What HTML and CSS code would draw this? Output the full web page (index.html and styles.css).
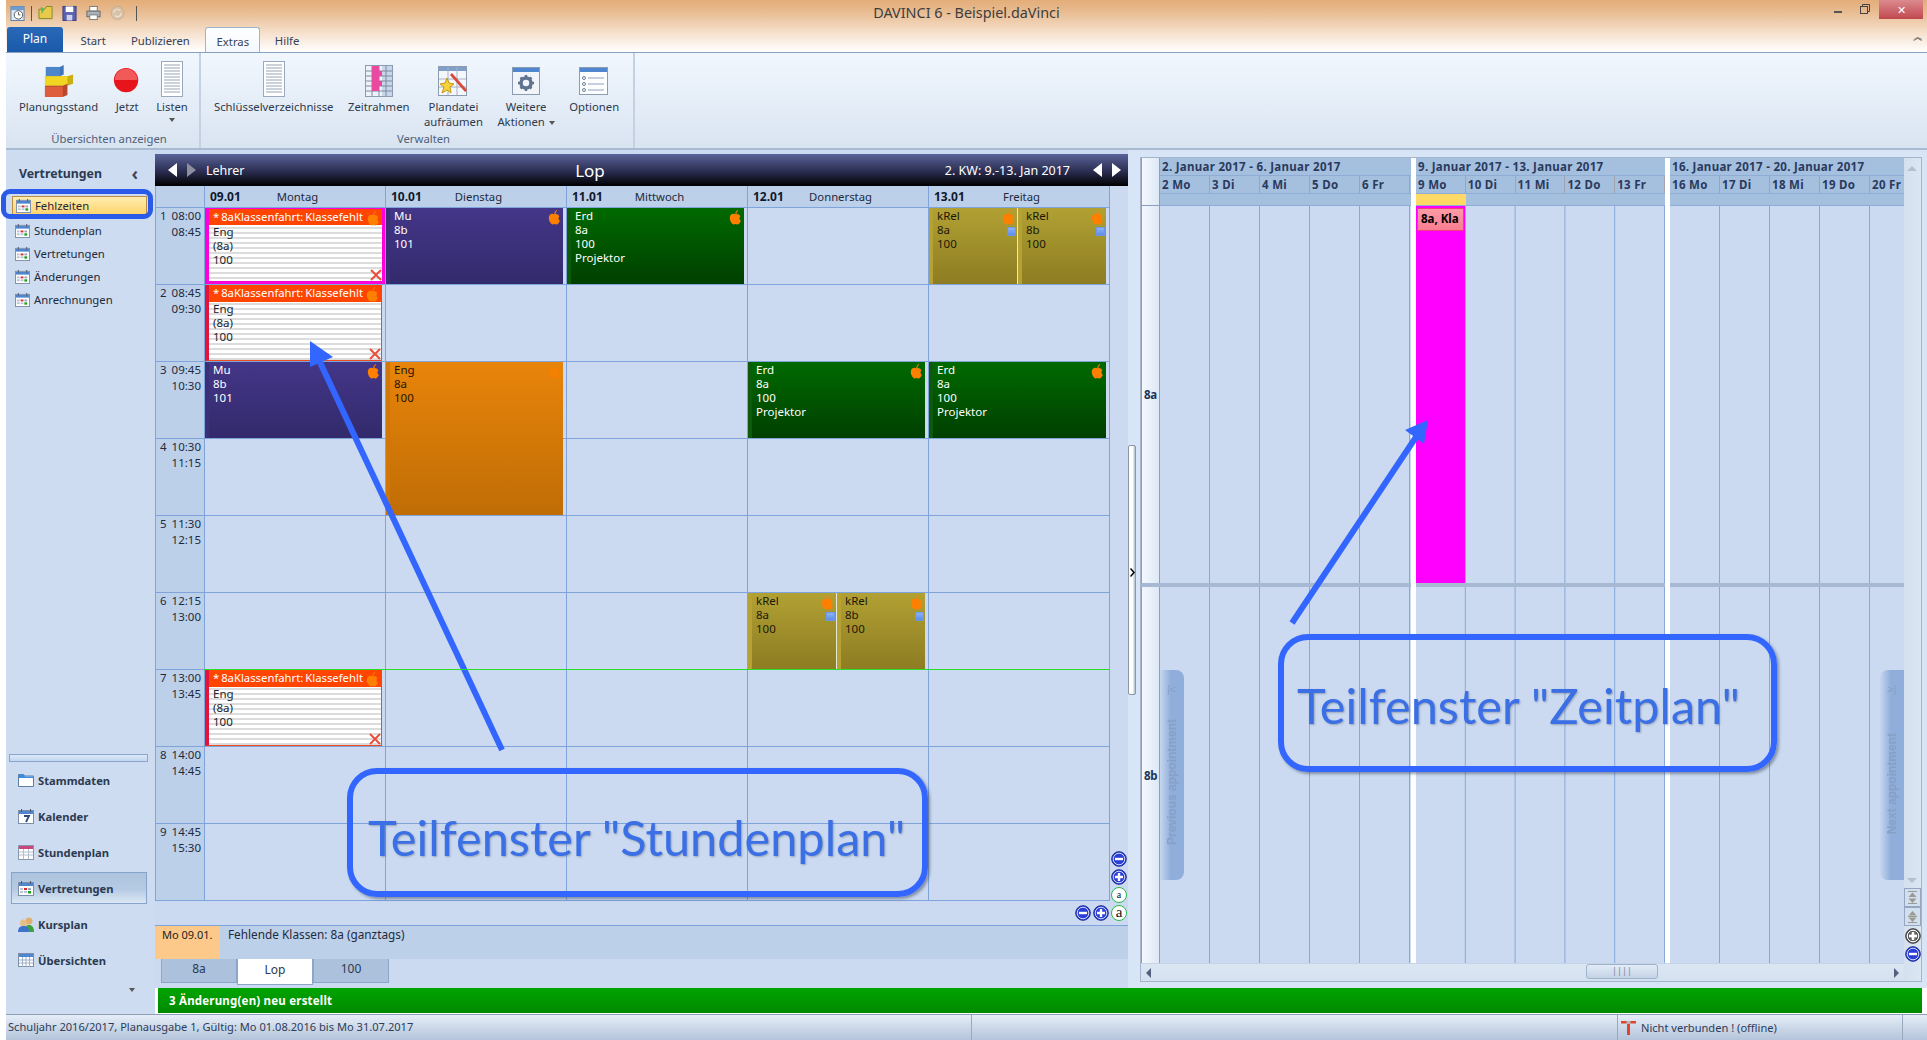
FILE: index.html
```html
<!DOCTYPE html>
<html lang="de">
<head>
<meta charset="utf-8">
<title>DAVINCI 6 - Beispiel.daVinci</title>
<link rel="stylesheet" href="styles.css">
</head>
<body>
<svg class="defs" width="0" height="0" aria-hidden="true">
  <symbol id="apple" viewBox="0 0 12 14"><path fill="#ff8000" d="M6 4C4 3 1 3.500.7 7c-.2 3 2 6.500 3.600 6.500.7 0 1-.4 1.700-.4s1 .4 1.700.4c1.400 0 2.800-2 3.300-3.500-1.400-.7-1.800-3-.5-4.200C9.500 4 7.500 3.300 6 4z"/><path fill="#ff8000" d="M5.800 4c0-1.500.7-3 2.200-4l.6.500C7.500 1.500 6.900 2.500 6.800 4z"/></symbol>
  <symbol id="cal" viewBox="0 0 16 16"><rect x=".5" y="2.500" width="15" height="13" fill="#fff" stroke="#7d8ea6"/><rect x="1" y="3" width="14" height="3" fill="#4f86d0"/><rect x="3" y="1" width="1" height="3" fill="#556"/><rect x="12" y="1" width="1" height="3" fill="#556"/><g fill="#b9c4d4"><rect x="2" y="8" width="3" height="2"/><rect x="2" y="11" width="3" height="2"/><rect x="6" y="11" width="3" height="2"/></g><rect x="6" y="8" width="3" height="2" fill="#d92b2b"/><rect x="10" y="8" width="3" height="2" fill="#9aa6b8"/><rect x="10" y="11" width="3" height="2.500" fill="#1ea01e"/></symbol>
  <symbol id="doc" viewBox="0 0 22 36"><rect x=".5" y=".5" width="21" height="35" fill="#fff" stroke="#9aa9bb"/><path stroke="#97a4b5" d="M3 4h16M3 7h16M3 10h16M3 13h16M3 16h16M3 19h16M3 22h16M3 25h16M3 28h16M3 31h16"/></symbol>
  <symbol id="xmark" viewBox="0 0 12 12"><path d="M1 1l10 10M11 1L1 11" stroke="#e8503c" stroke-width="2"/></symbol>
  <symbol id="minus" viewBox="0 0 16 16"><circle cx="8" cy="8" r="7.300" fill="#2b3fd6" stroke="#1a2a90"/><circle cx="8" cy="8" r="5.800" fill="none" stroke="#cfd8ff"/><rect x="4" y="6.800" width="8" height="2.400" fill="#fff"/></symbol>
  <symbol id="plus" viewBox="0 0 16 16"><circle cx="8" cy="8" r="7.300" fill="#2b3fd6" stroke="#1a2a90"/><circle cx="8" cy="8" r="5.800" fill="none" stroke="#cfd8ff"/><path d="M4 8h8M8 4v8" stroke="#fff" stroke-width="2.400"/></symbol>
</svg>

<div class="app">
  <header class="top">
    <div class="titlebar">
      <div class="qat">
        <svg class="q" viewBox="0 0 16 18"><rect x="1" y="2" width="14" height="15" fill="#dce9f7" stroke="#5d7ea8"/><rect x="1" y="2" width="14" height="4" fill="#6f9bd0"/><circle cx="9" cy="11" r="4.500" fill="#fff" stroke="#555"/><path d="M9 8v3h2" stroke="#555" fill="none"/></svg>
        <span class="qsep"></span>
        <svg class="q" viewBox="0 0 16 18"><path d="M1 5h6l2-3h6v13H1z" fill="#e8c94a" stroke="#7b8a2a"/><path d="M3 2l4 3-3 5z" fill="#5cb85c"/></svg>
        <svg class="q" viewBox="0 0 16 18"><rect x="1" y="2" width="14" height="15" fill="#5a62b0" stroke="#3b3f80"/><rect x="4" y="2" width="8" height="6" fill="#fff"/><rect x="5" y="11" width="6" height="6" fill="#cfd3ea"/></svg>
        <svg class="q" viewBox="0 0 16 18"><rect x="4" y="2" width="8" height="5" fill="#fff" stroke="#777"/><rect x="1" y="7" width="14" height="6" fill="#aab2bd" stroke="#666"/><rect x="4" y="11" width="8" height="5" fill="#fff" stroke="#777"/></svg>
        <svg class="q dim" viewBox="0 0 16 18"><circle cx="8" cy="9" r="7" fill="#d4c3ad" stroke="#bfa98f"/><path d="M4 9a4 4 0 0 1 7-2.500M12 9a4 4 0 0 1-7 2.500" stroke="#efe6da" stroke-width="1.500" fill="none"/></svg>
        <span class="qsep q-last"></span>
      </div>
      <div class="apptitle">DAVINCI 6 - Beispiel.daVinci</div>
      <div class="winctl">
        <span class="wmin"></span>
        <svg class="wrest" viewBox="0 0 10 10"><path d="M2.500 2.500V.5h7v7H7.500" fill="none" stroke="#444"/><rect x=".5" y="2.500" width="7" height="7" fill="none" stroke="#444"/></svg>
        <span class="wclose">✕</span>
      </div>
    </div>
    <nav class="tabs">
      <span class="tab tab-plan">Plan</span>
      <span class="tab">Start</span>
      <span class="tab">Publizieren</span>
      <span class="tab tab-on">Extras</span>
      <span class="tab">Hilfe</span>
      <span class="collapse">︽</span>
    </nav>
  </header>

  <section class="ribbon">
    <div class="rgroup rg1">
      <div class="rbtns">
        <div class="rbtn"><svg class="ri ri-wide" viewBox="0 0 32 34"><path d="M2 2h15l4-2v10l-4 2H2z" fill="#3f74b8"/><path d="M2 2h15v10H2z" fill="#4d86cc"/><path d="M1 12h24l6-2v10l-6 2H1z" fill="#c9ae14"/><path d="M1 12h24v10H1z" fill="#f0d623"/><path d="M1 22h19l5-2v12l-5 2H1z" fill="#b8482c"/><path d="M1 23h19v11H1z" fill="#df5c3c"/></svg><span>Planungsstand</span></div>
        <div class="rbtn"><svg class="ri" viewBox="0 0 32 32"><circle cx="15" cy="15" r="13" fill="#e8141c"/><path d="M3 15a12 12 0 0 1 24 0z" fill="#f25a5a"/></svg><span>Jetzt</span></div>
        <div class="rbtn"><svg class="ri tall" viewBox="0 0 22 36"><use href="#doc"/></svg><span>Listen</span><i class="caret"></i></div>
      </div>
      <div class="rlabel">Übersichten anzeigen</div>
    </div>
    <div class="rgroup rg2">
      <div class="rbtns">
        <div class="rbtn"><svg class="ri tall" viewBox="0 0 22 36"><use href="#doc"/></svg><span>Schlüsselverzeichnisse</span></div>
        <div class="rbtn"><svg class="ri" viewBox="0 0 28 32"><rect x=".5" y=".5" width="27" height="31" fill="#eef3f9" stroke="#8d9bb0"/><rect x="17" y="1" width="10" height="30" fill="#c7d6ea"/><path d="M7 1v30M14 1v30M21 1v30M1 6h26M1 11h26M1 16h26M1 21h26M1 26h26" stroke="#7f8a9c"/><path d="M7 1h7v5h3v5h-3v5h3v5h-3v5h-7z" fill="#e94aa0"/></svg><span>Zeitrahmen</span></div>
        <div class="rbtn"><svg class="ri" viewBox="0 0 30 32"><rect x=".5" y="1.500" width="28" height="29" fill="#f4f7fb" stroke="#8d9bb0"/><rect x="1" y="2" width="27" height="4" fill="#7f9fc8"/><path d="M10 2v28M19 2v28M1 14h27M1 22h27" stroke="#a5b2c4"/><path d="M9 13l2 5 5 1-4 3 1 6-4-3-5 3 2-6-4-3 5-1z" fill="#f3d23c" stroke="#c59a14"/><path d="M14 8l15 17-2 2L12 10z" fill="#d9483c"/></svg><span>Plandatei<br>aufräumen</span></div>
        <div class="rbtn"><svg class="ri" viewBox="0 0 28 32"><rect x=".5" y="2.500" width="27" height="27" fill="#f1f5fa" stroke="#8d9bb0"/><rect x="1" y="3" width="26" height="4" fill="#4f86d0"/><circle cx="14" cy="18" r="5" fill="none" stroke="#5f7390" stroke-width="3.500"/><path d="M14 10v3M14 23v3M6 18h3M19 18h3M8.500 12.500l2 2M17.500 21.500l2 2M19.500 12.500l-2 2M10.500 21.500l-2 2" stroke="#5f7390" stroke-width="2.500"/></svg><span>Weitere<br>Aktionen <i class="caret inl"></i></span></div>
        <div class="rbtn"><svg class="ri" viewBox="0 0 30 32"><rect x=".5" y="2.500" width="28" height="27" fill="#fbfdff" stroke="#8d9bb0"/><rect x="1" y="3" width="27" height="4" fill="#4f86d0"/><path d="M9 13h16M9 19h16M9 25h16" stroke="#8fa4c0"/><g fill="none" stroke="#6d7f99"><circle cx="5" cy="13" r="1.500"/><circle cx="5" cy="19" r="1.500"/><circle cx="5" cy="25" r="1.500"/></g></svg><span>Optionen</span></div>
      </div>
      <div class="rlabel">Verwalten</div>
    </div>
  </section>

  <div class="body">
    <aside class="side">
      <div class="sidehead"><b>Vertretungen</b><span class="chev">‹</span></div>
      <ul class="sitems">
        <li class="sitem on"><svg class="ic"><use href="#cal"/></svg>Fehlzeiten</li>
        <li class="sitem"><svg class="ic"><use href="#cal"/></svg>Stundenplan</li>
        <li class="sitem"><svg class="ic"><use href="#cal"/></svg>Vertretungen</li>
        <li class="sitem"><svg class="ic"><use href="#cal"/></svg>Änderungen</li>
        <li class="sitem"><svg class="ic"><use href="#cal"/></svg>Anrechnungen</li>
      </ul>
      <div class="sgrip"></div>
      <ul class="snav">
        <li class="nav"><svg class="nic" viewBox="0 0 16 14"><path d="M.5 1.500h5l1 1.500h9v10.500H.5z" fill="#fff" stroke="#5c7fa8"/><path d="M1 1.500h5l1 2h8v1.500H1z" fill="#3d8be0"/></svg>Stammdaten</li>
        <li class="nav"><svg class="nic" viewBox="0 0 16 16"><rect x=".5" y="2.500" width="15" height="13" fill="#fff" stroke="#7d8ea6"/><rect x="1" y="3" width="14" height="3" fill="#4f86d0"/><rect x="3" y="1" width="1" height="3" fill="#556"/><rect x="12" y="1" width="1" height="3" fill="#556"/><path d="M6 8h5l-3 6" fill="none" stroke="#2a4a7a" stroke-width="1.800"/></svg>Kalender</li>
        <li class="nav"><svg class="nic" viewBox="0 0 16 16"><rect x=".5" y="1.500" width="15" height="14" fill="#fff" stroke="#8a97ab"/><rect x="1" y="2" width="14" height="3" fill="#c9487c"/><path d="M1 8h14M1 11h14M5.500 5v10M10.500 5v10" stroke="#b3bfd0"/></svg>Stundenplan</li>
        <li class="nav on"><svg class="nic"><use href="#cal"/></svg>Vertretungen</li>
        <li class="nav"><svg class="nic" viewBox="0 0 16 16"><circle cx="11" cy="5" r="3.500" fill="#e0b070"/><path d="M6 16c0-5 2-7 5-7s5 2 5 7z" fill="#3fa03f"/><circle cx="5.500" cy="7" r="3.500" fill="#e8be84"/><path d="M0 16c0-4 2-6 5.500-6S11 12 11 16z" fill="#3b74c8"/></svg>Kursplan</li>
        <li class="nav"><svg class="nic" viewBox="0 0 16 14"><rect x=".5" y=".5" width="15" height="13" fill="#fff" stroke="#7d8ea6"/><rect x="1" y="1" width="14" height="3" fill="#4f86d0"/><path d="M1 7h14M1 10h14M4.500 4v10M8 4v10M11.500 4v10" stroke="#9fb0c8"/></svg>Übersichten</li>
      </ul>
      <div class="smore"><i class="caret"></i></div>
    </aside>

    <main class="content">
      <div class="panes">
        <section class="plan">
          <div class="phead">
            <div class="ph-left"><i class="tri-l"></i><i class="tri-r dim"></i><span class="ph-kind">Lehrer</span></div>
            <div class="ph-mid">Lop</div>
            <div class="ph-right"><span>2. KW: 9.-13. Jan 2017</span><i class="tri-l"></i><i class="tri-r"></i></div>
          </div>

          <div class="tt">
            <div class="dh corner"></div>
            <div class="dh"><b>09.01</b><span>Montag</span></div>
            <div class="dh"><b>10.01</b><span>Dienstag</span></div>
            <div class="dh"><b>11.01</b><span>Mittwoch</span></div>
            <div class="dh"><b>12.01</b><span>Donnerstag</span></div>
            <div class="dh"><b>13.01</b><span>Freitag</span></div>

            <div class="tm r1"><span>1</span><p>08:00<br>08:45</p></div>
            <div class="tm r2"><span>2</span><p>08:45<br>09:30</p></div>
            <div class="tm r3"><span>3</span><p>09:45<br>10:30</p></div>
            <div class="tm r4"><span>4</span><p>10:30<br>11:15</p></div>
            <div class="tm r5"><span>5</span><p>11:30<br>12:15</p></div>
            <div class="tm r6"><span>6</span><p>12:15<br>13:00</p></div>
            <div class="tm r7"><span>7</span><p>13:00<br>13:45</p></div>
            <div class="tm r8"><span>8</span><p>14:00<br>14:45</p></div>
            <div class="tm r9"><span>9</span><p>14:45<br>15:30</p></div>

            <div class="nowline"></div>

            <article class="abs mag c1 r1"><div class="abs-h">* 8aKlassenfahrt: Klassefehlt</div><div class="abs-b">Eng<br>(8a)<br>100</div><svg class="apl"><use href="#apple"/></svg><svg class="xm"><use href="#xmark"/></svg></article>
            <article class="abs c1 r2"><div class="abs-h">* 8aKlassenfahrt: Klassefehlt</div><div class="abs-b">Eng<br>(8a)<br>100</div><svg class="apl"><use href="#apple"/></svg><svg class="xm"><use href="#xmark"/></svg></article>
            <article class="abs c1 r7"><div class="abs-h">* 8aKlassenfahrt: Klassefehlt</div><div class="abs-b">Eng<br>(8a)<br>100</div><svg class="apl"><use href="#apple"/></svg><svg class="xm"><use href="#xmark"/></svg></article>

            <article class="les pur c1 r3">Mu<br>8b<br>101<svg class="apl"><use href="#apple"/></svg></article>
            <article class="les pur c2 r1">Mu<br>8b<br>101<svg class="apl"><use href="#apple"/></svg></article>
            <article class="les org c2 r3 span2">Eng<br>8a<br>100<svg class="apl"><use href="#apple"/></svg></article>
            <article class="les grn c3 r1">Erd<br>8a<br>100<br>Projektor<svg class="apl"><use href="#apple"/></svg></article>
            <article class="les grn c4 r3">Erd<br>8a<br>100<br>Projektor<svg class="apl"><use href="#apple"/></svg></article>
            <article class="les grn c5 r3">Erd<br>8a<br>100<br>Projektor<svg class="apl"><use href="#apple"/></svg></article>

            <div class="pair c4 r6">
              <article class="les olv">kRel<br>8a<br>100<svg class="apl"><use href="#apple"/></svg><i class="note"></i></article>
              <article class="les olv">kRel<br>8b<br>100<svg class="apl"><use href="#apple"/></svg><i class="note"></i></article>
            </div>
            <div class="pair c5 r1">
              <article class="les olv">kRel<br>8a<br>100<svg class="apl"><use href="#apple"/></svg><i class="note"></i></article>
              <article class="les olv">kRel<br>8b<br>100<svg class="apl"><use href="#apple"/></svg><i class="note"></i></article>
            </div>
          </div>
          <div class="ttpad"></div>

          <div class="pfoot">
            <div class="pf-date">Mo 09.01.</div>
            <div class="pf-text">Fehlende Klassen: 8a (ganztags)</div>
          </div>
          <div class="ptabs">
            <span class="ptab">8a</span>
            <span class="ptab on">Lop</span>
            <span class="ptab">100</span>
          </div>

          <div class="zoomv">
            <svg class="zb"><use href="#minus"/></svg>
            <svg class="zb"><use href="#plus"/></svg>
            <span class="za small">a</span>
          </div>
          <div class="zoomh">
            <svg class="zb"><use href="#minus"/></svg>
            <svg class="zb"><use href="#plus"/></svg>
            <span class="za">a</span>
          </div>
        </section>

        <div class="splitter"><div class="pill"><svg class="pill-a" viewBox="0 0 5 9"><path d="M.5.500l3.500 4-3.500 4" fill="none" stroke="#000" stroke-width="1.500"/></svg></div></div>

        <section class="zeit">
          <div class="zmain">
            <div class="zcanvas">
              <div class="zlabels">
                <div class="zl-h"></div>
                <div class="zl a">8a</div>
                <div class="zl-gap"></div>
                <div class="zl b">8b</div>
              </div>
              <div class="week w1">
                <div class="wtitle">2. Januar 2017 - 6. Januar 2017</div>
                <div class="wdays"><span>2 Mo</span><span>3 Di</span><span>4 Mi</span><span>5 Do</span><span>6 Fr</span></div>
                <div class="wsub"></div>
                <div class="wrow a"></div><div class="wgap"></div><div class="wrow b"></div>
              </div>
              <div class="week w2">
                <div class="wtitle">9. Januar 2017 - 13. Januar 2017</div>
                <div class="wdays"><span>9 Mo</span><span>10 Di</span><span>11 Mi</span><span>12 Do</span><span>13 Fr</span></div>
                <div class="wsub"><i class="mark"></i></div>
                <div class="wrow a"><div class="evt"><div class="evt-l">8a, Kla</div></div></div><div class="wgap"></div><div class="wrow b"></div>
              </div>
              <div class="week w3">
                <div class="wtitle">16. Januar 2017 - 20. Januar 2017</div>
                <div class="wdays"><span>16 Mo</span><span>17 Di</span><span>18 Mi</span><span>19 Do</span><span>20 Fr</span></div>
                <div class="wsub"></div>
                <div class="wrow a"></div><div class="wgap"></div><div class="wrow b"></div>
              </div>
            </div>
            <div class="hbar">
              <i class="harr l"></i>
              <div class="hthumb"><span>||||</span></div>
              <i class="harr r"></i>
            </div>
          </div>
          <div class="vbar">
            <i class="varr up"></i>
            <i class="varr down"></i>
            <div class="vbtns">
              <span class="vb"><svg class="vbi" viewBox="0 0 15 17"><path d="M3 2.500h9M3 14.500h9" stroke="#9a9a90"/><path d="M7.500 3.500l4 4.500h-8zM7.500 14l4-4.500h-8z" fill="#9a9a90"/></svg></span>
              <span class="vb"><svg class="vbi" viewBox="0 0 15 17"><path d="M3 8.500h9M3 14.500h9" stroke="#9a9a90"/><path d="M7.500 3l4 4.500h-8zM7.500 14l-4-4.500h8z" fill="#9a9a90"/></svg></span>
              <svg class="zb gray"><use href="#plus"/></svg>
              <svg class="zb"><use href="#minus"/></svg>
            </div>
          </div>
          <div class="appt prev"><span>Previous appointment</span><em>|&lt;</em></div>
          <div class="appt next"><span>Next appointment</span><em>&gt;|</em></div>
        </section>
      </div>
      <div class="greenbar">3 Änderung(en) neu erstellt</div>
    </main>
  </div>

  <footer class="status">
    <div class="st st1">Schuljahr 2016/2017, Planausgabe 1, Gültig: Mo 01.08.2016 bis Mo 31.07.2017</div>
    <div class="st st2"></div>
    <div class="st st3"><svg class="tic" viewBox="0 0 15 15"><path d="M0 1h15v2.500H9V15H6V3.500H0z" fill="#e0442c"/><rect x="5.500" y="1" width="4" height="3" fill="#b5b5b5"/></svg>Nicht verbunden ! (offline)</div>
    <div class="st st4"></div>
  </footer>

  <div class="hl-side"></div>
  <div class="callout c-stunden">Teilfenster "Stundenplan"</div>
  <div class="callout c-zeit">Teilfenster "Zeitplan"</div>
  <svg class="arrows" viewBox="0 0 1927 1040">
    <path d="M502 750L318 358" stroke="#3366ff" stroke-width="6" fill="none"/>
    <path d="M310 341L310 367L333 357z" fill="#3366ff"/>
    <path d="M1292 623L1418 434" stroke="#3366ff" stroke-width="6" fill="none"/>
    <path d="M1428 420L1405 430L1424 444z" fill="#3366ff"/>
  </svg>
</div>
</body>
</html>
```

FILE: styles.css
```css
* { box-sizing: border-box; }
html, body { margin: 0; padding: 0; background: #fff; }
body { width: 1927px; height: 1040px; overflow: hidden; font-family: "Noto Sans", "Open Sans", sans-serif; font-size: 12px; color: #1f2a3c; }
.defs { position: absolute; }
ul { list-style: none; margin: 0; padding: 0; }
p { margin: 0; }

.app { position: relative; width: 1927px; height: 1040px; padding-left: 6px; display: flex; flex-direction: column; overflow: hidden; }

/* title + tabs */
.top { height: 52px; background: linear-gradient(#e3ad78 0, #e8bb90 22%, #f6e2cf 65%, #fff 100%); flex: none; display: flex; flex-direction: column; }
.titlebar { height: 27px; display: grid; grid-template-columns: 1fr auto 1fr; align-items: start; }
.qat { display: flex; align-items: center; gap: 9px; padding: 4px 0 0 4px; }
.q { width: 15px; height: 18px; flex: none; }
.q.dim { opacity: .8; }
.qsep { width: 1px; height: 15px; background: #555; margin: 0 -3px 0 -3px; }
.q-last { margin-left: 2px; }
.apptitle { font-size: 14.400px; color: #3d3d3d; line-height: 25px; }
.winctl { display: flex; justify-content: flex-end; align-items: flex-start; margin-right: 4px; }
.wmin { width: 8px; height: 2px; background: #555; margin: 11px 18px 0 0; }
.wrest { width: 10px; height: 10px; margin: 4px 9px 0 0; }
.wclose { width: 44px; height: 19px; background: linear-gradient(#dc8a8e, #c0484f); color: #fff; text-align: center; font-size: 11px; line-height: 19px; }

.tabs { height: 25px; display: flex; align-items: flex-end; position: relative; }
.tab { height: 25px; line-height: 28px; padding: 0 12.500px; color: #33435a; font-size: 11.300px; }
.tab-plan { width: 56px; margin-left: 1px; padding: 0; text-align: center; color: #fff; background: linear-gradient(#2a68b8, #1a5aaa); border-radius: 3px 3px 0 0; line-height: 24px; font-size: 12px; margin-right: 5px; }
.tab-on { width: 55px; padding: 0; text-align: center; background: linear-gradient(#fff, #f4f8fd); border: 1px solid #9db4cf; border-bottom: 0; border-radius: 3px 3px 0 0; margin-left: 3px; margin-right: 2px; }
.collapse { position: absolute; right: 4px; top: 2px; font-size: 10px; color: #333; }

/* ribbon */
.ribbon { height: 98px; flex: none; display: flex; background: linear-gradient(#f1f7fe, #d9e4f1); border-top: 1px solid #87a1be; border-bottom: 2px solid #a9bbd0; }
.rgroup { display: flex; flex-direction: column; border-right: 2px solid #c3d2e3; }
.rg1 { width: 195px; padding-left: 13px; }
.rg2 { width: 434px; padding-left: 13px; }
.rbtns { flex: 1; display: flex; gap: 14.500px; }
.rg1 .rbtns { gap: 14px; }
.rbtn { display: flex; flex-direction: column; align-items: center; text-align: center; font-size: 11.300px; line-height: 15px; color: #2e3a4c; padding-top: 12px; position: relative; white-space: nowrap; }
.ri { width: 30px; height: 32px; margin-bottom: 2px; }
.ri.ri-wide { width: 30px; height: 32px; }
.ri.tall { width: 22px; height: 36px; margin-top: -4px; }
.rlabel { text-align: center; font-size: 11.300px; line-height: 14px; color: #506078; height: 16px; }
.caret { display: block; width: 0; height: 0; border: 3px solid transparent; border-top: 4px solid #555; border-bottom: 0; margin-top: 4px; }
.caret.inl { display: inline-block; vertical-align: middle; margin: 0 0 0 1px; }

/* body */
.body { flex: 1; display: flex; min-height: 0; }
.side { width: 149px; flex: none; background: #cddcf0; display: flex; flex-direction: column; }
.sidehead { height: 46px; display: flex; align-items: center; justify-content: space-between; padding: 0 17px 0 13px; font-size: 12.300px; color: #2c3a50; }
.chev { font-size: 18px; color: #445; font-weight: 700; line-height: 1; }
.sitem { height: 23px; display: flex; align-items: center; gap: 4px; padding-left: 9px; color: #1f2a3c; font-size: 11.300px; }
.sitem.on { height: 19px; margin: 0 8px 4px 6px; padding-left: 3px; background: linear-gradient(#ffeeb0, #ffd36d); border: 1px solid #b98c48; }
.ic { width: 15px; height: 15px; flex: none; }
.sgrip { height: 8px; margin: auto 7px 0 3px; border: 1px solid #8aa6cc; background: linear-gradient(#dbe8f8, #c4d6ee); }
.nav { height: 36px; display: flex; align-items: center; gap: 4px; padding-left: 12px; font-weight: 700; font-size: 11.200px; color: #2c3a50; }
.nav.on { height: 32px; margin: 2px 8px 2px 5px; padding-left: 6px; border: 1px solid #86a3c9; background: linear-gradient(#adc4de, #b6cbe3 55%, #dbe7f4); }
.nic { width: 16px; height: 16px; flex: none; }
.smore { height: 36px; display: flex; justify-content: flex-end; padding: 6px 20px 0 0; }

.content { flex: 1; display: flex; flex-direction: column; min-width: 0; }
.panes { height: 838px; flex: none; display: flex; background: #d7e5f6; }

/* Stundenplan */
.plan { width: 973px; flex: none; position: relative; background: #cbdaf0; padding-top: 4px; display: flex; flex-direction: column; }
.phead { height: 32px; flex: none; display: flex; align-items: center; background: linear-gradient(#5a6399, #2a2d50 55%, #000); color: #fff; }
.ph-left { width: 388px; display: flex; align-items: center; gap: 10px; padding-left: 13px; font-size: 12.500px; }
.ph-mid { width: 94px; text-align: center; font-size: 17px; }
.ph-right { flex: 1; display: flex; align-items: center; justify-content: flex-end; gap: 10px; padding-right: 7px; font-size: 12.500px; }
.ph-right span { margin-right: 13px; }
.tri-l, .tri-r { width: 0; height: 0; border-style: solid; border-color: transparent; }
.tri-l { border-width: 7px 9px 7px 0; border-right-color: #fff; }
.tri-r { border-width: 7px 0 7px 9px; border-left-color: #fff; }
.tri-r.dim { border-left-color: #8d8f9f; }

.tt { width: 955px; height: 715px; display: grid; flex: none; grid-template-columns: 48px repeat(5, 181px); grid-template-rows: 21px repeat(9, 77px);
  background-color: #cbdaf0;
  background-image: linear-gradient(to right, #7fa4dc 1px, transparent 1px), linear-gradient(to bottom, #7fa4dc 1px, transparent 1px);
  background-size: 181px 100%, 100% 77px; background-position: 48px 0, 0 21px;
  border-left: 1px solid #7fa4dc; border-right: 1px solid #7fa4dc; border-bottom: 1px solid #7fa4dc; position: relative; }
.dh { background: #bcd0ea; border-left: 1px solid #7fa4dc; display: grid; grid-template-columns: 1fr auto 1fr; align-items: center; padding-left: 5px; font-size: 11.300px; }
.dh.corner { border-left: 0; display: block; }
.dh b { font-size: 12px; color: #10182a; }
.tm { grid-column: 1; background: #bcd0ea; border-top: 1px solid #7fa4dc; display: flex; justify-content: space-between; padding: 0 3px 0 4px; font-size: 11.500px; line-height: 16px; color: #1f2a3c; }
.tm p { text-align: right; }
.r1 { grid-row: 2; } .r2 { grid-row: 3; } .r3 { grid-row: 4; } .r4 { grid-row: 5; } .r5 { grid-row: 6; } .r6 { grid-row: 7; } .r7 { grid-row: 8; } .r8 { grid-row: 9; } .r9 { grid-row: 10; }
.span2 { grid-row-end: span 2; }
.c1 { grid-column: 2; } .c2 { grid-column: 3; } .c3 { grid-column: 4; } .c4 { grid-column: 5; } .c5 { grid-column: 6; }
.nowline { grid-column: 2 / -1; grid-row: 8; height: 1px; background: #28e028; align-self: start; z-index: 2; }

.les { position: relative; margin: 1px 3px 0 1px; border-left: 4px solid; padding: 1px 0 0 4px; line-height: 14px; font-size: 11.500px; min-width: 0; }
.pur { background: linear-gradient(#443688, #322a6c); border-color: #3a3078; color: #fff; }
.grn { background: linear-gradient(#006a00, #003f00); border-color: #0d5a0d; color: #fff; }
.org { background: linear-gradient(#e8840a, #bf6d05); border-color: #d27608; color: #1f1400; }
.olv { background: linear-gradient(#b1a133, #8d7c22); border-color: #b5a233; color: #1c1808; margin: 0; flex: 1; }
.org .apl { opacity: .6; }
.apl { position: absolute; right: 2px; top: 2px; width: 13px; height: 15px; }
.note { position: absolute; right: 1px; top: 19px; width: 9px; height: 9px; background: linear-gradient(#8ab2f5, #5e8de8); border: 1px solid #6f98e0; }
.pair { display: flex; gap: 1px; margin: 1px 3px 0 1px; background: #e4e6d8; min-width: 0; }

.abs { position: relative; margin: 1px 3px 0 1px; border-right: 1px solid #f04a20; border-bottom: 1px solid #f04a20; border-left: 4px solid #e0143c; background: repeating-linear-gradient(#fff 0 3px, #dcdcdc 3px 5px); display: flex; flex-direction: column; font-size: 11.500px; line-height: 14px; min-width: 0; }
.abs.mag { margin: 1px 0 0 1px; border: 3px solid #ff00d8; border-top-width: 1px; border-left-width: 4px; }
.abs-h { background: #ff4500; color: #fff; height: 17px; padding-left: 4px; line-height: 15px; white-space: nowrap; overflow: hidden; word-spacing: -1px; margin-right: -1px; font-size: 11.300px; flex: none; }
.abs.mag .abs-h { height: 16px; margin-right: 0; }
.abs-b { padding: 0 0 0 4px; color: #20242c; }
.xm { position: absolute; right: 0; bottom: 0; width: 12px; height: 12px; }
.ttpad { height: 25px; flex: none; border-bottom: 1px solid #7fa4dc; }

.pfoot { height: 33px; flex: none; background: #bcd0ea; display: flex; font-size: 11.800px; line-height: 16px; }
.pf-date { width: 65px; background: #fdc98a; padding: 1px 0 0 7px; font-size: 11px; color: #222; }
.pf-text { padding: 0 0 0 8px; }
.ptabs { display: flex; padding-left: 6px; }
.ptab { width: 76px; height: 24px; background: #acc1dc; border: 1px solid #8ca6c9; border-top: 0; text-align: center; line-height: 19px; font-size: 12px; color: #2b3a52; }
.ptab.on { height: 26px; background: #fff; line-height: 21px; }

.zoomv { position: absolute; right: 1px; top: 701px; display: flex; flex-direction: column; gap: 2px; width: 16px; }
.zoomh { position: absolute; right: 1px; top: 755px; display: flex; gap: 2px; }
.zb { width: 16px; height: 16px; flex: none; display: block; }
.zb.gray { filter: grayscale(1) brightness(1.3); }
.za { width: 16px; height: 16px; border-radius: 50%; border: 1px solid #27b84a; background: #fff; text-align: center; font-family: "Liberation Serif", serif; font-size: 15px; line-height: 12px; color: #111; }
.za.small { font-size: 10px; line-height: 13px; }

.splitter { width: 12px; flex: none; position: relative; background: #d7e5f6; }
.pill { position: absolute; left: 0; top: 295px; width: 8px; height: 250px; background: linear-gradient(to right, #fff 60%, #a9bcc8); border: 1px solid #8b98a8; border-radius: 2px; }
.pill-a { position: absolute; left: 1px; top: 122px; width: 5px; height: 9px; }

/* Zeitplan */
.zeit { width: 782px; height: 825px; margin-top: 7px; flex: none; position: relative; display: flex; border: 1px solid #a3b4cb; background: #cbdaf0; }
.zmain { width: 763px; display: flex; flex-direction: column; flex: none; }
.zcanvas { flex: 1; display: flex; min-height: 0; }
.zlabels { width: 19px; flex: none; background: linear-gradient(to right, #f4f8fd, #dde8f6); border-left: 1px solid #8aa0c0; border-right: 1px solid #8aa0c0; display: flex; flex-direction: column; font-weight: 700; font-size: 11.500px; color: #1c3458; }
.zl-h { height: 48px; border-bottom: 1px solid #8aa0c0; flex: none; }
.zl { display: flex; align-items: center; justify-content: center; flex: none; letter-spacing: -.3px; }
.zl.a, .wrow.a { height: 377px; }
.zl.b, .wrow.b { flex: 1; }
.zl-gap, .wgap { height: 4px; flex: none; background: #a7b8d2; }
.zl-gap { margin: 0 -1px; }

.week { display: flex; flex-direction: column; flex: none; overflow: hidden; }
.w1 { width: 251px; border-right: 5px solid #fff; box-sizing: content-box; }
.w2 { width: 249px; border-right: 5px solid #fff; box-sizing: content-box; }
.w3 { width: 234px; }
.wtitle { height: 18px; background: #a5bfdf; font-weight: 700; font-size: 11.500px; line-height: 17px; padding-left: 2px; color: #2a3a5c; white-space: nowrap; letter-spacing: .3px; border-bottom: 1px solid #8fadd4; flex: none; }
.wdays { height: 18px; display: grid; grid-template-columns: repeat(5, 50px); background: #a5bfdf; border-bottom: 1px solid #8fadd4; flex: none; }
.wdays span { font-weight: 700; font-size: 11.500px; line-height: 17px; padding-left: 2px; color: #2a3a5c; border-right: 1px solid #a0a4ac; white-space: nowrap; letter-spacing: .3px; }
.w3 .wdays span:last-child { border-right: 0; }
.wsub { height: 12px; background: #a5bfdf; border-bottom: 1px solid #8fadd4; flex: none; }
.mark { display: block; width: 50px; height: 11px; background: #ffd966; }
.wrow { background-image: linear-gradient(to right, transparent 49px, #86a8db 49px); background-size: 50px 100%; flex: none; }
.w2 .wdays { grid-template-columns: repeat(5, 49.800px); }
.w2 .wrow { background-size: 49.800px 100%; }
.evt { width: 49px; height: 100%; background: #ff00ff; padding: 2px 1px 0; }
.evt-l { height: 23px; background: linear-gradient(#ff9aa6, #f87e90); border: 1px solid #f83a86; font-weight: 700; font-size: 11.500px; line-height: 20px; padding-left: 3px; color: #000; white-space: nowrap; overflow: hidden; }

.hbar { height: 18px; flex: none; position: relative; background: linear-gradient(#dbe6f3, #d5e1f0); display: flex; align-items: center; justify-content: space-between; padding: 0 5px; border-top: 1px solid #c5d3e6; }
.harr { width: 0; height: 0; border-style: solid; border-color: transparent; }
.harr.l { border-width: 5px 5px 5px 0; border-right-color: #53607f; }
.harr.r { border-width: 5px 0 5px 5px; border-left-color: #53607f; }
.hthumb { position: absolute; left: 445px; top: 0; width: 72px; height: 15px; border: 1px solid #a0b3cc; border-radius: 3px; background: linear-gradient(#e3ecf7, #c4d3e6); text-align: center; font-size: 9px; line-height: 12px; color: #75849b; }

.vbar { width: 17px; flex: none; position: relative; background: linear-gradient(to right, #d4e0ee, #dbe6f2); }
.varr { position: absolute; left: 3px; width: 0; height: 0; border-style: solid; border-color: transparent; }
.varr.up { top: 8px; border-width: 0 5px 5px 5px; border-bottom-color: #b4c0ce; }
.varr.down { top: 720px; border-width: 5px 5px 0 5px; border-top-color: #b4c0ce; }
.vbtns { position: absolute; left: 0; top: 730px; display: flex; flex-direction: column; width: 17px; align-items: center; }
.vb { width: 17px; height: 19px; border: 1px solid #95a6be; background: #d2dff0; display: block; }
.vbi { display: block; width: 15px; height: 17px; }
.vbtns .zb { margin-top: 2px; }

.appt { position: absolute; top: 512px; width: 24px; height: 210px; display: flex; flex-direction: column; align-items: center; overflow: hidden; color: #86a0c6; font-family: "Liberation Sans", sans-serif; font-weight: 700; font-size: 12px; }
.appt span { writing-mode: vertical-rl; transform: rotate(180deg); white-space: nowrap; }
.appt em { position: absolute; left: 7px; top: 13px; font-style: normal; font-weight: 400; font-size: 11px; }
.prev { left: 19px; background: linear-gradient(to right, #c6d7ee, #90aedb 45%, #90aedb); border-radius: 0 8px 8px 0; justify-content: flex-end; padding-bottom: 35px; }
.next { left: 739px; background: linear-gradient(to right, #c6d7ee, #90aedb 45%, #90aedb); border-radius: 8px 0 0 8px; justify-content: flex-end; padding-bottom: 46px; }

.greenbar { height: 25px; margin-left: 3px; width: 1764px; flex: none; background: linear-gradient(#00a400, #008a00); color: #fff; font-weight: 700; font-size: 11.500px; line-height: 25px; padding-left: 11px; letter-spacing: .2px; }

.status { height: 26px; flex: none; background: linear-gradient(#e5edf8, #b4c4da); border-top: 1px solid #8f9fb5; display: flex; font-size: 11.100px; color: #2d3c58; line-height: 23px; }
.st { border-right: 1px solid #9aa9bd; white-space: nowrap; }
.st1 { width: 966px; padding-left: 2px; }
.st2 { width: 646px; }
.st3 { width: 285px; display: flex; align-items: center; gap: 5px; padding-left: 3px; }
.st4 { flex: 1; border-right: 0; }
.tic { width: 15px; height: 15px; flex: none; }

/* annotations laid over the screenshot */
.hl-side { position: absolute; left: 1px; top: 189px; width: 152px; height: 30px; border: 5px solid #2a5ae8; border-radius: 9px; }
.callout { position: absolute; border: 6px solid #3366ff; border-radius: 30px; font-family: Lato, "Open Sans", sans-serif; font-size: 48.700px; color: #3a6fe6; display: flex; align-items: center; white-space: nowrap; box-shadow: 2px 2px 3px rgba(70,80,100,.55); text-shadow: 1px 1px 2px rgba(70,80,100,.4); }
.c-stunden { left: 347px; top: 768px; width: 581px; height: 129px; padding: 8px 0 0 15px; }
.c-zeit { left: 1278px; top: 634px; width: 499px; height: 138px; padding: 4px 0 0 13px; }
.arrows { position: absolute; left: 0; top: 0; width: 1927px; height: 1040px; pointer-events: none; }
```
